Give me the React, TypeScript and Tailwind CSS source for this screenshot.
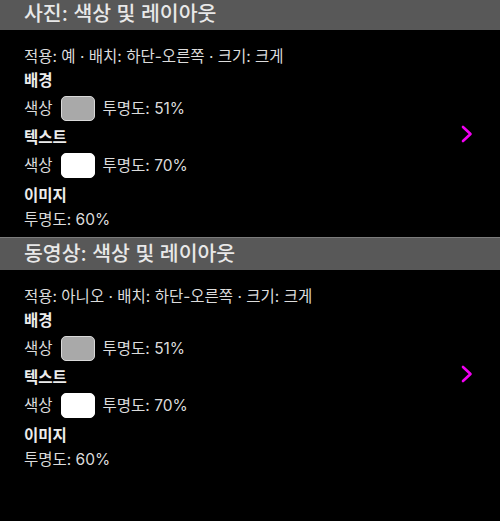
import React from "react";

const FONT = { fontFamily: 'Inter, "Noto Sans CJK KR", sans-serif' };

function Swatch({ color }: { color: "gray" | "white" }) {
  return (
    <span
      className={
        color === "gray"
          ? "inline-block w-[34px] h-[25px] rounded-[5px] border border-[#d9d9d9] bg-[#a9a9a9]"
          : "inline-block w-[34px] h-[25px] rounded-[5px] border border-white bg-white"
      }
    />
  );
}

function Chevron() {
  return (
    <svg width="12" height="18" viewBox="0 0 12 18" fill="none">
      <path d="M2 2 L9.5 9 L2 16" stroke="#f000f0" strokeWidth="2.6" strokeLinecap="round" strokeLinejoin="round" />
    </svg>
  );
}

function Section({ title, apply }: { title: string; apply: string }) {
  return (
    <div>
      <div className="h-[33px] border-t border-[#7c7c7c] bg-[#585858] flex items-center pl-6">
        <span className="text-[20.5px] font-medium text-[#e8e8e8] leading-none">{title}</span>
      </div>
      <div className="flex items-center pr-[27px]">
        <div className="flex-1 pl-6 pt-[15px] pb-[5px] text-[15.5px] text-[#dcdcdc]">
          <div className="h-6 leading-6">적용: {apply} · 배치: 하단-오른쪽 · 크기: 크게</div>
          <div className="h-6 leading-6 font-semibold text-[#ececec]">배경</div>
          <div className="h-[31px] flex items-center">
            <span>색상</span>
            <span className="ml-2 mr-2 flex"><Swatch color="gray" /></span>
            <span>투명도: 51%</span>
          </div>
          <div className="mt-[2px] h-6 leading-6 font-semibold text-[#ececec]">텍스트</div>
          <div className="h-[31px] flex items-center">
            <span>색상</span>
            <span className="ml-2 mr-2 flex"><Swatch color="white" /></span>
            <span>투명도: 70%</span>
          </div>
          <div className="mt-[3px] h-6 leading-6 font-semibold text-[#ececec]">이미지</div>
          <div className="h-6 leading-6">투명도: 60%</div>
        </div>
        <Chevron />
      </div>
    </div>
  );
}

export default function App() {
  return (
    <div className="w-[500px] h-[521px] overflow-hidden bg-black" style={FONT}>
      <div className="-mt-[3px]">
        <Section title="사진: 색상 및 레이아웃" apply="예" />
        <Section title="동영상: 색상 및 레이아웃" apply="아니오" />
      </div>
    </div>
  );
}
